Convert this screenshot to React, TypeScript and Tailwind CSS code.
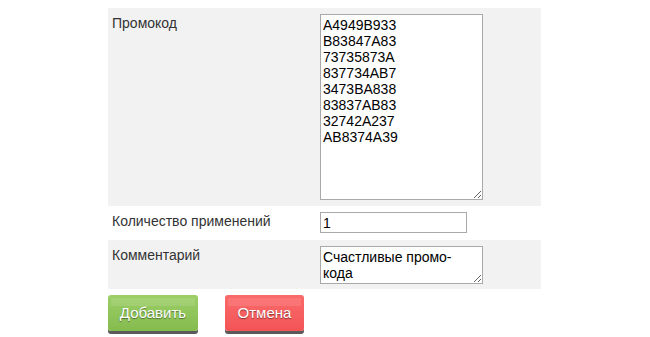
const codes = [
  "A4949B933",
  "B83847A83",
  "73735873A",
  "837734AB7",
  "3473BA838",
  "83837AB83",
  "32742A237",
  "AB8374A39",
];

const field =
  "block border border-[#a9a9a9] bg-white text-[14px] leading-4 text-black px-[2px] py-[2px] outline-none font-['Liberation_Sans',Arial,sans-serif]";

const App = () => {
  return (
    <div className="min-h-[337px] bg-white font-['Liberation_Sans',Arial,sans-serif] text-[14px] leading-4 text-[#333]">
      <div className="ml-[108px] w-[433px] pt-[8px]">
        <div className="flex bg-[#f2f2f2] py-[6px]">
          <div className="w-[212px] pl-[4px] pt-[1px]">Промокод</div>
          <textarea
            className={`${field} h-[186px] w-[163px] resize`}
            defaultValue={codes.join("\n")}
          />
        </div>

        <div className="flex pt-[6px] pb-[7px]">
          <div className="w-[212px] pl-[4px] pt-[1px]">Количество применений</div>
          <input
            className={`${field} h-[21px] w-[147px] text-[#7a0000]`}
            defaultValue="1"
          />
        </div>

        <div className="flex bg-[#f2f2f2] pt-[6px] pb-[5px]">
          <div className="w-[212px] pl-[4px] pt-[1px]">Комментарий</div>
          <textarea
            className={`${field} h-[38px] w-[163px] resize`}
            defaultValue={"Счастливые промо-\nкода"}
          />
        </div>

        <div className="mt-[6px] flex gap-[27px]">
          <button className="relative h-[36px] w-[90px] rounded-[3px] bg-gradient-to-b from-[#9ccf67] to-[#84bb4e] text-[15px] text-white shadow-[0_3px_0_#5a5a5a] [text-shadow:0_1px_1px_rgba(0,0,0,0.45)]">
            <span className="absolute left-[3px] right-[3px] top-[3px] h-[8px] bg-white/10" />
            <span className="relative">Добавить</span>
          </button>
          <button className="relative h-[36px] w-[79px] rounded-[3px] bg-gradient-to-b from-[#fa6a6b] to-[#f35456] text-[15px] text-white shadow-[0_3px_0_#5a5a5a] [text-shadow:0_1px_1px_rgba(0,0,0,0.45)]">
            <span className="absolute left-[3px] right-[3px] top-[3px] h-[8px] bg-white/10" />
            <span className="relative">Отмена</span>
          </button>
        </div>
      </div>
    </div>
  );
};

export default App;
